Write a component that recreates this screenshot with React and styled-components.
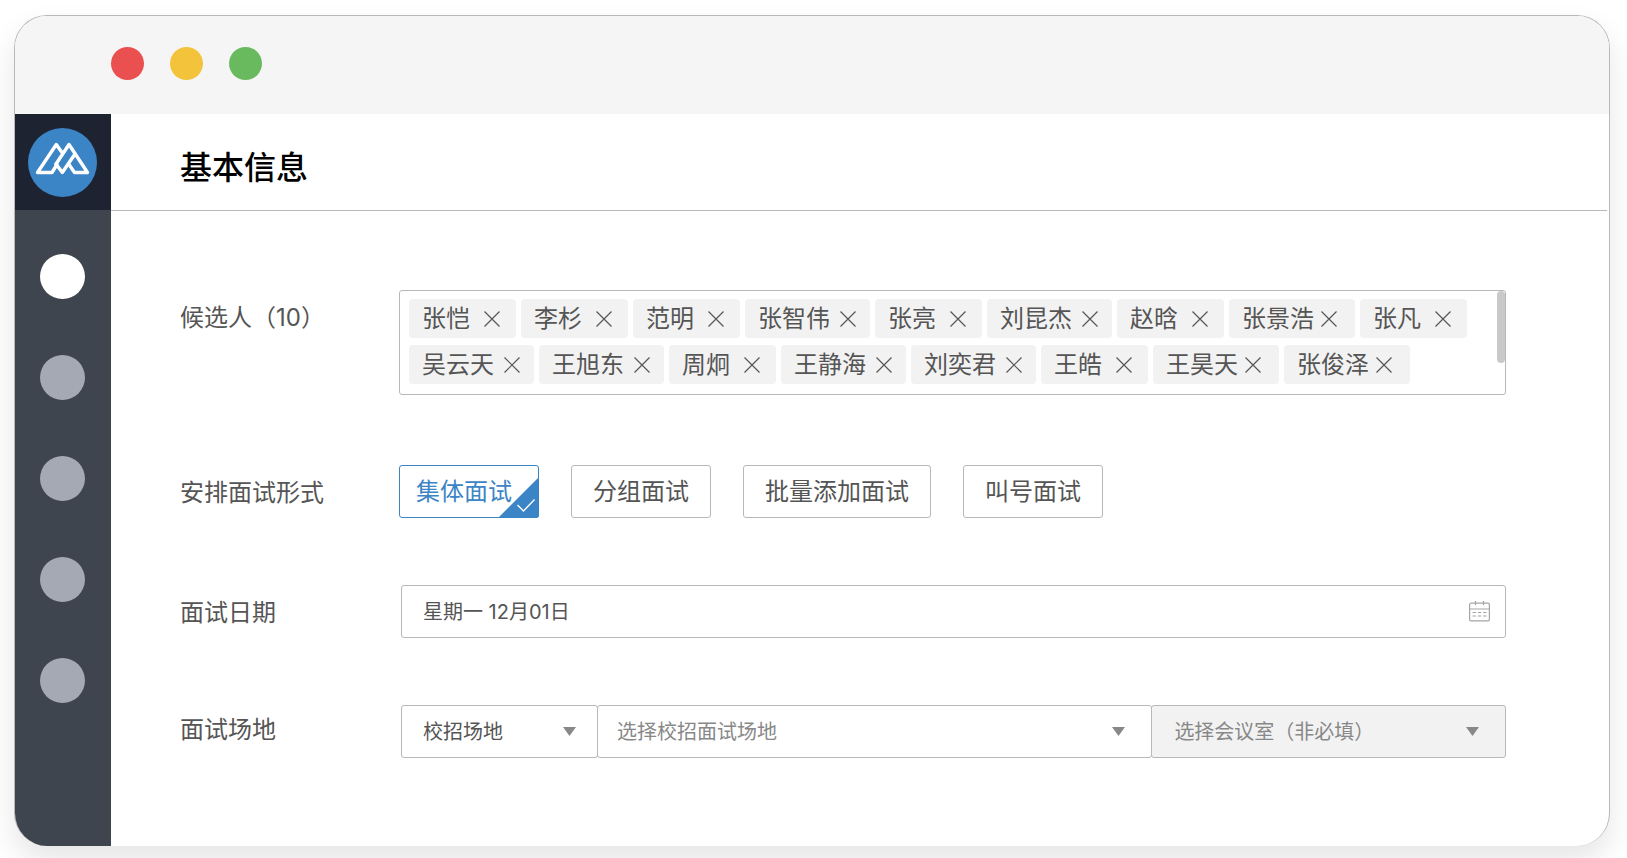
import React, { useState } from 'react';
import styled, { createGlobalStyle, css } from 'styled-components';

const GlobalStyle = createGlobalStyle`
  * { box-sizing: border-box; }

  body {
    margin: 0;
    background: #fff;
    color: #555;
    font-family: Inter, 'Noto Sans CJK SC', sans-serif;
  }

  button, input, select {
    font-family: inherit;
    color: inherit;
  }
`;

const people = [
  { name: '张恺' },
  { name: '李杉' },
  { name: '范明' },
  { name: '张智伟' },
  { name: '张亮' },
  { name: '刘昆杰' },
  { name: '赵晗' },
  { name: '张景浩', tight: true },
  { name: '张凡' },
  { name: '吴云天' },
  { name: '王旭东' },
  { name: '周炯' },
  { name: '王静海' },
  { name: '刘奕君' },
  { name: '王皓' },
  { name: '王昊天', tight: true },
  { name: '张俊泽', tight: true },
];

const modes = ['集体面试', '分组面试', '批量添加面试', '叫号面试'];

const navItems = ['面试', '候选人', '职位', '日程', '设置'];

const Page = styled.div`
  padding: 15px 17px 12px 14px;
`;

const Window = styled.div`
  display: flex;
  flex-direction: column;
  min-height: calc(100vh - 27px);
  overflow: hidden;
  border: 1px solid #b8b8b8;
  border-bottom: 0;
  border-radius: 33px;
  background: #fff;
  box-shadow: 0 15px 30px rgba(0, 0, 0, 0.1);
`;

const TitleBar = styled.div`
  display: flex;
  gap: 26px;
  height: 98px;
  padding: 31px 96px;
  background: #f5f5f5;
`;

const Light = styled.span`
  width: 33px;
  height: 33px;
  border-radius: 50%;
  background: ${props => props.$color};
`;

const Body = styled.div`
  display: flex;
  flex: 1;
`;

const Sidebar = styled.aside`
  flex: none;
  width: 96px;
  background: #3f454e;
`;

const LogoLink = styled.a`
  display: flex;
  align-items: center;
  justify-content: center;
  height: 96px;
  padding-right: 2px;
  background: #1d2331;
`;

const Nav = styled.nav`
  display: flex;
  flex-direction: column;
  align-items: center;
  gap: 56px;
  padding: 44px 2px 44px 0;
`;

const NavButton = styled.button`
  width: 45px;
  height: 45px;
  padding: 0;
  border: 0;
  border-radius: 50%;
  background: ${props => props.$active ? '#fff' : '#a5a9b4'};
`;

const Main = styled.main`
  flex: 1;
  min-width: 0;
`;

const Header = styled.header`
  display: flex;
  align-items: center;
  height: 97px;
  margin-right: 2px;
  padding: 11px 69px 0;
  border-bottom: 1px solid #b8b8b8;
`;

const Title = styled.h1`
  margin: 0;
  color: #000;
  font-size: 32px;
  font-weight: 500;
  line-height: 48px;
`;

const Form = styled.form`
  display: flex;
  flex-direction: column;
  gap: 65px;
  padding: 79px 103px 80px 69px;
`;

const Row = styled.div`
  display: grid;
  grid-template-columns: ${props => props.$inset ? '221px' : '219px'} minmax(0, 1fr);
  align-items: start;
`;

const Label = styled.label`
  padding-top: 1px;
  font-size: 24px;
  line-height: ${props => props.$compact ? '48px' : '54px'};
`;

const frame = css`
  border: 1px solid #b8b8b8;
  border-radius: 3px;
  background: #fff;
`;

const TagBox = styled.div`
  ${frame}
  display: flex;
  min-height: 105px;
  margin-bottom: 5px;
`;

const TagList = styled.ul`
  display: flex;
  flex: 1;
  flex-wrap: wrap;
  align-content: flex-start;
  gap: 7px 5px;
  margin: 0;
  padding: 8px 9px;
  list-style: none;
`;

const ScrollThumb = styled.span`
  width: 8px;
  height: 72px;
  border-radius: 4px;
  background: #c9c9c9;
`;

const tagSpacing = ({ $short, $tight }) => {
  if ($short) return css`gap: 14px; padding: 0 16px 0 13px;`;
  if ($tight) return css`gap: 7px; padding: 0 18px 0 13px;`;
  return css`gap: 10px; padding: 0 14px 0 13px;`;
};

const Tag = styled.li`
  display: flex;
  align-items: center;
  height: 39px;
  border-radius: 4px;
  background: #f2f2f2;
  font-size: 24px;
  line-height: 36px;
  ${tagSpacing}
`;

const RemoveButton = styled.button`
  display: flex;
  padding: 0;
  border: 0;
  background: none;
`;

const ModeList = styled.div`
  display: flex;
  flex-wrap: wrap;
  gap: 32px;
`;

const Mode = styled.label`
  ${frame}
  position: relative;
  display: flex;
  height: 53px;
  padding: 0 21px;
  font-size: 24px;
  line-height: 52px;
  white-space: nowrap;

  ${props => props.$checked && css`
    padding: 0 26px 0 16px;
    border-color: #3b84c6;
    color: #3b84c6;
  `}
`;

const ModeInput = styled.input`
  appearance: none;
  width: 0;
  height: 0;
  margin: 0;
`;

const Corner = styled.svg`
  position: absolute;
  right: -1px;
  bottom: -1px;
`;

const DateField = styled.div`
  ${frame}
  display: flex;
  align-items: center;
  height: 53px;
  padding: 0 15px 0 21px;
`;

const DateInput = styled.input`
  flex: 1;
  min-width: 0;
  padding: 0;
  border: 0;
  outline: 0;
  background: none;
  font-size: 20px;
  line-height: 30px;
`;

const Places = styled.div`
  display: grid;
  grid-template-columns: 197px minmax(0, 555fr) minmax(0, 354fr);
`;

const SelectWrap = styled.div`
  display: grid;
  align-items: center;

  & + & { margin-left: -1px; }

  > * { grid-area: 1 / 1; }

  > svg {
    justify-self: end;
    margin-right: ${props => props.$narrow ? '22px' : '27px'};
    pointer-events: none;
  }
`;

const Select = styled.select`
  ${frame}
  appearance: none;
  width: 100%;
  height: 53px;
  padding: 0 48px 0 ${props => props.$muted ? '19px' : '21px'};
  font-size: 20px;
  color: ${props => props.$muted ? '#888' : '#555'};

  &:disabled {
    padding-left: 22px;
    background: #f2f2f2;
    opacity: 1;
  }
`;

const Logo = () => (
  <svg width="69" height="69" viewBox="0 0 69 69" aria-hidden="true">
    <circle cx="34.5" cy="34.5" r="34.5" fill="#3b84c6" />
    <g fill="none" stroke="#fff" strokeWidth="3.4" strokeLinecap="round" strokeLinejoin="round">
      <path d="M34 24.5 L28.3 16.5 L9.5 44.5 H24 L29 36.5" />
      <path d="M28 36 L34.3 44.5 L47 26" />
      <path d="M28 36 L41 16.5 L59.5 44.5 H46.5 L41 36.5" />
    </g>
  </svg>
);

const Cross = () => (
  <svg width="16" height="16" viewBox="0 0 16 16" fill="none" stroke="#555" strokeWidth="1.2" aria-hidden="true">
    <path d="M0.5 0.5 L15.5 15.5 M15.5 0.5 L0.5 15.5" />
  </svg>
);

const Arrow = () => (
  <svg width="13" height="9" viewBox="0 0 13 9" aria-hidden="true">
    <path d="M0 0 H13 L6.5 9 Z" fill="#888" />
  </svg>
);

const Calendar = () => (
  <svg width="21" height="21" viewBox="0 0 21 21" fill="none" stroke="#a5a5a5" strokeWidth="1.2" aria-hidden="true">
    <rect x="0.6" y="2.2" width="19.8" height="17.6" rx="1.6" />
    <path d="M0.6 8 H20.4 M6.5 0 V4 M14.5 0 V4" />
    <path d="M3.5 11.5 H17.5 M3.5 15 H17.5" strokeDasharray="3.4 1.9" />
  </svg>
);

const Check = () => (
  <Corner width="41" height="41" viewBox="0 0 41 41" aria-hidden="true">
    <path d="M41 0 V38 Q41 41 38 41 H0 Z" fill="#3b84c6" />
    <path d="M19.5 28 L25.5 34 L36.5 22.5" fill="none" stroke="#fff" strokeWidth="1.4" />
  </Corner>
);

export default function App() {
  const [tags, setTags] = useState(people);
  const [mode, setMode] = useState(modes[0]);
  const [date, setDate] = useState('星期一 12月01日');

  const removeTag = name => setTags(tags.filter(tag => tag.name !== name));

  return (
    <Page>
      <GlobalStyle />
      <Window>
        <TitleBar>
          <Light $color="#ea5050" />
          <Light $color="#f4c33c" />
          <Light $color="#69b95e" />
        </TitleBar>
        <Body>
          <Sidebar>
            <LogoLink href="#" aria-label="首页"><Logo /></LogoLink>
            <Nav>
              {navItems.map((item, i) => (
                <NavButton key={item} type="button" aria-label={item} $active={i === 0} />
              ))}
            </Nav>
          </Sidebar>
          <Main>
            <Header><Title>基本信息</Title></Header>
            <Form onSubmit={e => e.preventDefault()}>
              <Row>
                <Label as="span" id="people-label">候选人（10）</Label>
                <TagBox>
                  <TagList aria-labelledby="people-label">
                    {tags.map(({ name, tight }) => (
                      <Tag key={name} $short={name.length === 2} $tight={tight}>
                        {name}
                        <RemoveButton type="button" aria-label={`移除${name}`} onClick={() => removeTag(name)}>
                          <Cross />
                        </RemoveButton>
                      </Tag>
                    ))}
                  </TagList>
                  <ScrollThumb />
                </TagBox>
              </Row>
              <Row>
                <Label as="span" id="mode-label">安排面试形式</Label>
                <ModeList role="radiogroup" aria-labelledby="mode-label">
                  {modes.map(item => (
                    <Mode key={item} $checked={item === mode}>
                      <ModeInput type="radio" name="mode" checked={item === mode} onChange={() => setMode(item)} />
                      {item}
                      {item === mode && <Check />}
                    </Mode>
                  ))}
                </ModeList>
              </Row>
              <Row $inset>
                <Label htmlFor="date">面试日期</Label>
                <DateField>
                  <DateInput id="date" type="text" value={date} onChange={e => setDate(e.target.value)} />
                  <Calendar />
                </DateField>
              </Row>
              <Row $inset>
                <Label htmlFor="place-type" $compact>面试场地</Label>
                <Places>
                  <SelectWrap $narrow>
                    <Select id="place-type"><option>校招场地</option></Select>
                    <Arrow />
                  </SelectWrap>
                  <SelectWrap>
                    <Select $muted aria-label="校招面试场地"><option>选择校招面试场地</option></Select>
                    <Arrow />
                  </SelectWrap>
                  <SelectWrap>
                    <Select $muted disabled aria-label="会议室"><option>选择会议室（非必填）</option></Select>
                    <Arrow />
                  </SelectWrap>
                </Places>
              </Row>
            </Form>
          </Main>
        </Body>
      </Window>
    </Page>
  );
}
